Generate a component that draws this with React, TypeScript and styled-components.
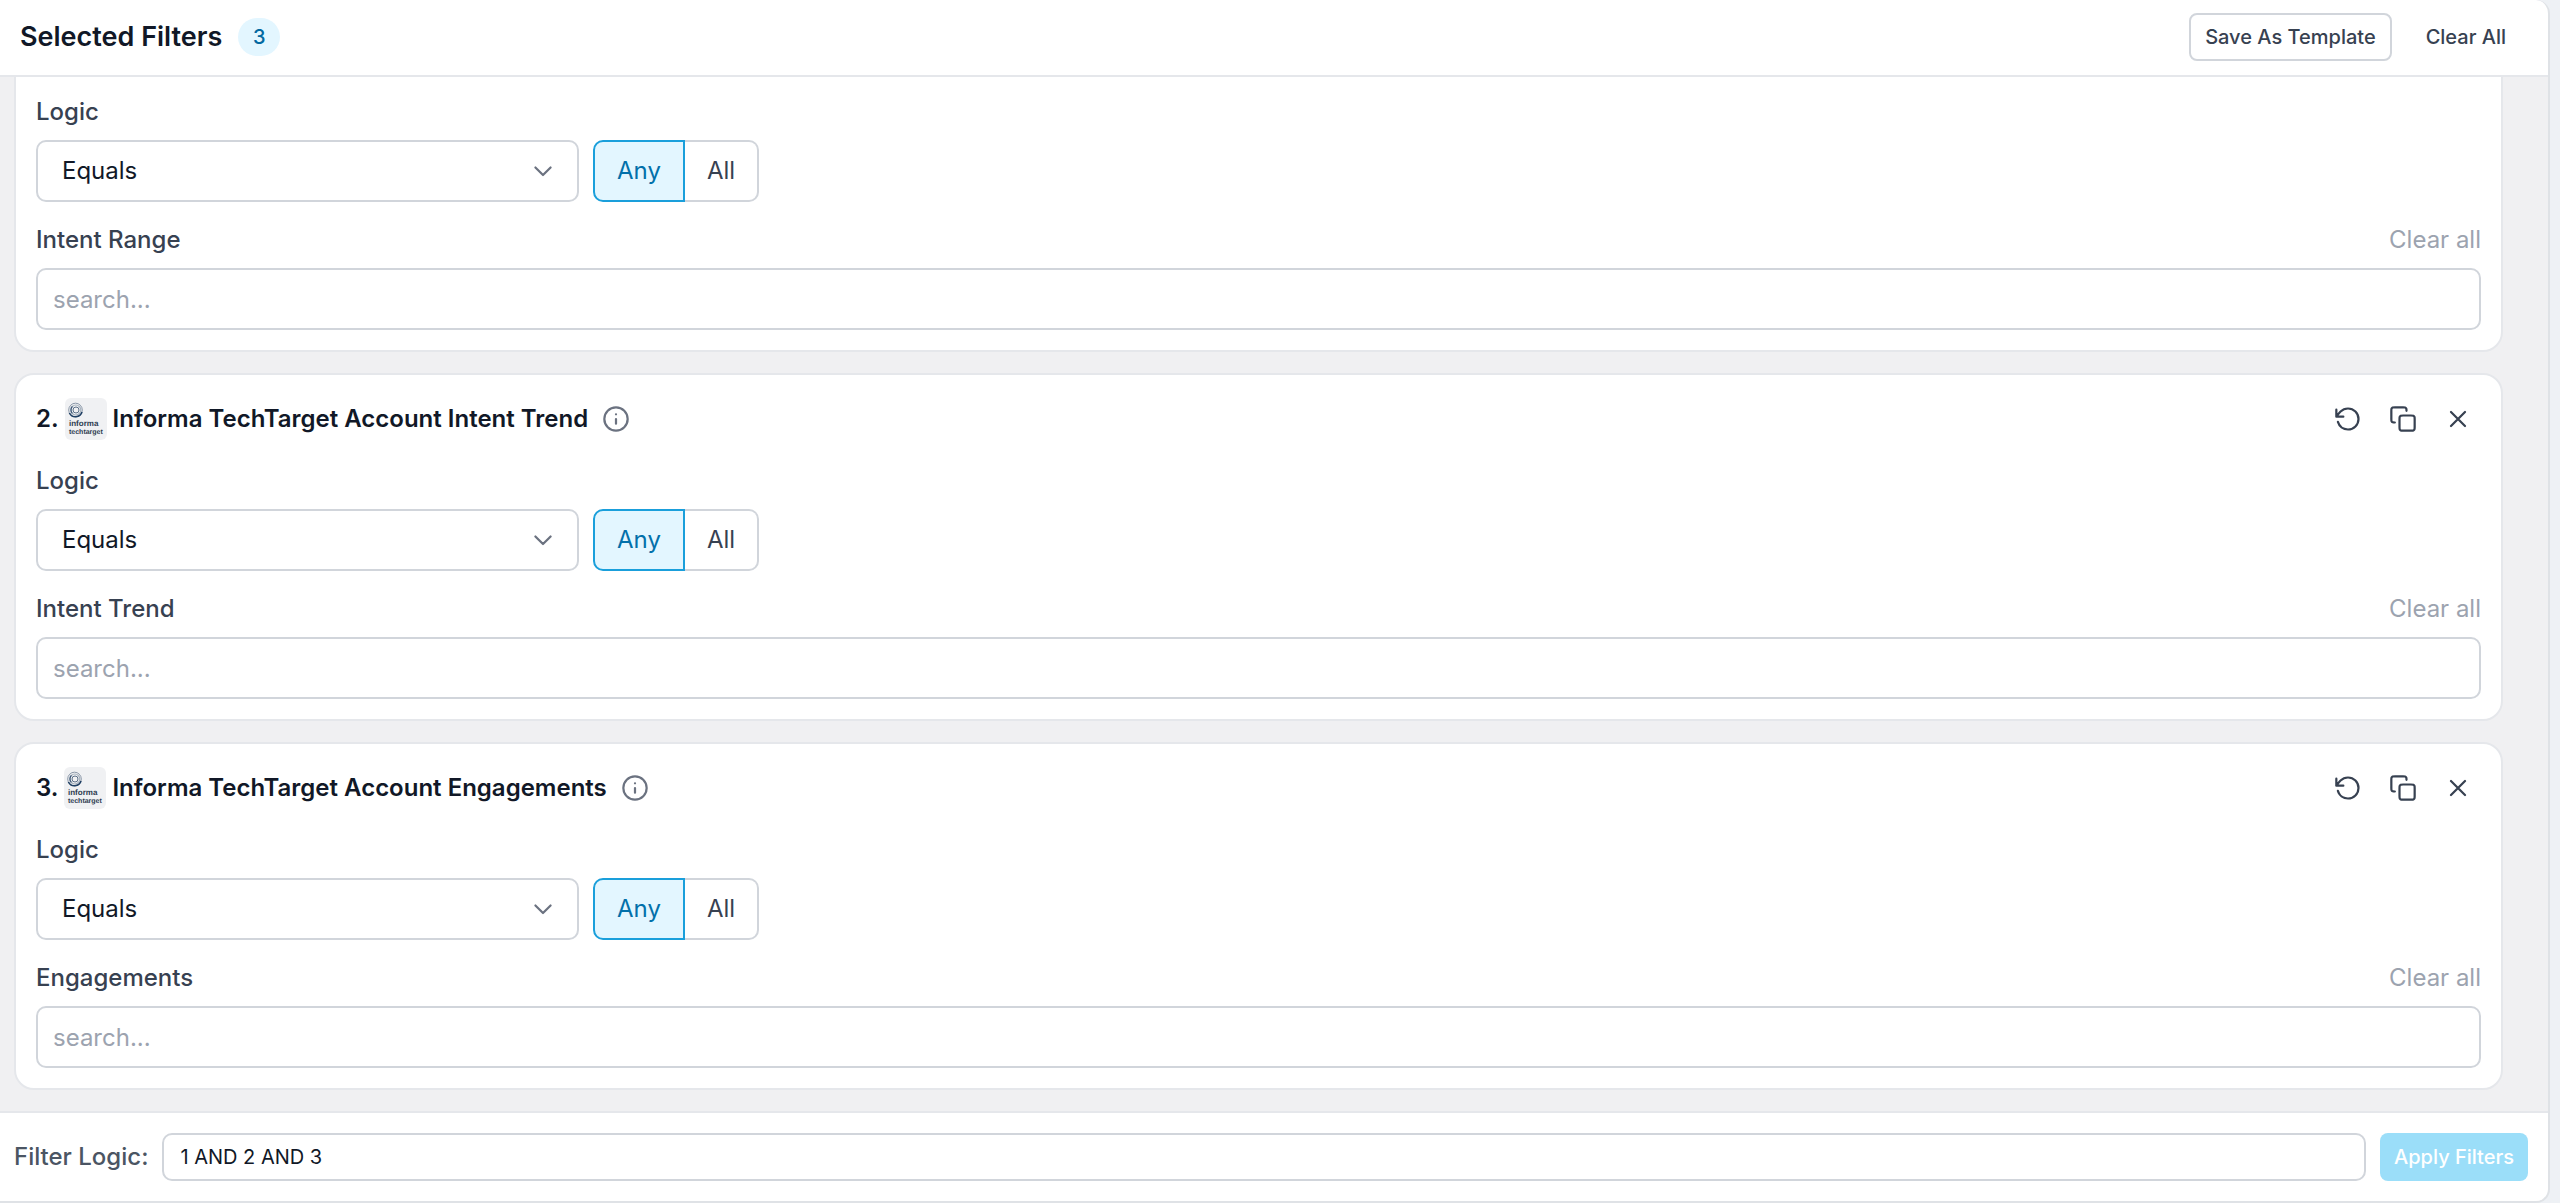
import React, { useLayoutEffect, useRef, useState } from "react";
import styled, { createGlobalStyle } from "styled-components";

const GlobalStyle = createGlobalStyle`
  *, *::before, *::after { box-sizing: border-box; }
  body {
    margin: 0;
    background: #eef1f5;
    color: #111827;
    font-family: Inter, "Liberation Sans", sans-serif;
    font-size: 24px;
    line-height: 36px;
  }
  button, input, select { font: inherit; color: inherit; margin: 0; }
  button { cursor: pointer; }
`;

const Page = styled.div`
  height: 100vh;
  padding: 0 10px 0 0;
`;

const Panel = styled.main`
  display: flex;
  flex-direction: column;
  height: 100%;
  overflow: hidden;
  background: #ffffff;
  border: 1px solid #dfe2e6;
  border-width: 0 2px 2px 0;
  border-radius: 0 14px 14px 0;
`;

const Header = styled.header`
  display: flex;
  align-items: center;
  justify-content: space-between;
  flex: none;
  height: 77px;
  padding: 0 26px 1px 20px;
  border-bottom: 2px solid #e5e7eb;
`;

const TitleGroup = styled.div`
  display: flex;
  align-items: center;
  gap: 16px;
`;

const Title = styled.h1`
  margin: 0;
  font-size: 27px;
  font-weight: 600;
`;

const CountBadge = styled.span`
  min-width: 42px;
  border-radius: 20px;
  background: #e3f6ff;
  color: #0369a1;
  font-size: 20px;
  font-weight: 500;
  line-height: 38px;
  text-align: center;
`;

const ButtonGroup = styled.div`
  display: flex;
  gap: 18px;
`;

const Button = styled.button<{ $variant: "outline" | "plain" | "primary" }>`
  flex: none;
  height: 48px;
  padding: 0 14px;
  border: ${({ $variant }) => ($variant === "primary" ? "0" : "2px")} solid
    ${({ $variant }) => ($variant === "outline" ? "#d1d5db" : "transparent")};
  border-radius: 8px;
  background: ${({ $variant }) => ($variant === "primary" ? "#9bdef9" : "#ffffff")};
  color: ${({ $variant }) => ($variant === "primary" ? "#ffffff" : "#374151")};
  font-size: 20px;
  font-weight: 500;
  line-height: 32px;
`;

const FilterList = styled.div`
  display: flex;
  flex-direction: column;
  flex: 1;
  gap: 21px;
  min-height: 0;
  padding: 21px 45px 21px 14px;
  overflow-y: auto;
  scrollbar-width: none;
  background: #f0f0f2;
`;

const Card = styled.section`
  flex: none;
  padding: 20px;
  border: 2px solid #e5e7eb;
  border-radius: 20px;
  background: #ffffff;
`;

const CardHeader = styled.div`
  display: flex;
  align-items: center;
  justify-content: space-between;
  height: 48px;
`;

const CardTitle = styled.h2`
  display: flex;
  align-items: center;
  gap: 6px;
  margin: 0;
  font-size: 24px;
  font-weight: 600;
`;

const LogoTile = styled.svg`
  width: 42px;
  height: 42px;
  border-radius: 6px;
  background: #f0f1f3;
  font-family: "Liberation Sans", sans-serif;
  text-rendering: geometricPrecision;
`;

const InfoButton = styled.button`
  display: flex;
  margin-left: 8px;
  padding: 0;
  border: 0;
  background: none;
  color: #6b7280;
`;

const Actions = styled.div`
  display: flex;
  gap: 9px;
`;

const IconButton = styled.button`
  display: grid;
  place-items: center;
  width: 46px;
  height: 46px;
  padding: 0;
  border: 0;
  background: none;
  color: #374151;
`;

const Field = styled.div`
  display: flex;
  flex-direction: column;
  gap: 10px;
  margin-top: 20px;
`;

const FieldHeader = styled.div`
  display: flex;
  justify-content: space-between;
`;

const FieldLabel = styled.label`
  color: #374151;
  font-weight: 500;
`;

const ClearLink = styled.button`
  padding: 0;
  border: 0;
  background: none;
  color: #9ca3af;
`;

const LogicRow = styled.div`
  display: flex;
  gap: 14px;
`;

const SelectBox = styled.div`
  position: relative;
  width: 543px;
`;

const Select = styled.select`
  width: 100%;
  height: 62px;
  padding: 0 60px 0 24px;
  border: 2px solid #d1d5db;
  border-radius: 10px;
  background: #ffffff;
  appearance: none;
`;

const SelectArrow = styled.span`
  position: absolute;
  top: 0;
  right: 22px;
  bottom: 0;
  display: flex;
  align-items: center;
  color: #6b7280;
  pointer-events: none;
`;

const Segments = styled.div`
  display: flex;
`;

const Segment = styled.button<{ $active: boolean; $side: "left" | "right" }>`
  height: 62px;
  padding: 0 22px;
  border: 2px solid ${({ $active }) => ($active ? "#1a9fdb" : "#d1d5db")};
  border-left-width: ${({ $side, $active }) => ($side === "left" || $active ? 2 : 0)}px;
  border-right-width: ${({ $side, $active }) => ($side === "right" || $active ? 2 : 0)}px;
  border-radius: ${({ $side }) => ($side === "left" ? "10px 0 0 10px" : "0 10px 10px 0")};
  background: ${({ $active }) => ($active ? "#e3f6ff" : "#ffffff")};
  color: ${({ $active }) => ($active ? "#0270aa" : "#374151")};
`;

const SearchInput = styled.input`
  width: 100%;
  height: 62px;
  padding: 0 15px;
  border: 2px solid #d1d5db;
  border-radius: 10px;
  background: #ffffff;
  &::placeholder { color: #9ca3af; opacity: 1; }
`;

const Footer = styled.footer`
  display: flex;
  align-items: center;
  flex: none;
  gap: 14px;
  height: 90px;
  padding: 0 20px 0 14px;
  border-top: 2px solid #e5e7eb;
`;

const FooterLabel = styled.label`
  color: #4b5563;
  font-weight: 500;
`;

const LogicInput = styled.input`
  flex: 1;
  min-width: 0;
  height: 48px;
  padding: 0 16px;
  border: 2px solid #d1d5db;
  border-radius: 10px;
  background: #ffffff;
  font-size: 20px;
`;

const iconPaths = {
  info: "M12 16V12M12 8H12.01M22 12a10 10 0 1 1-20 0 10 10 0 0 1 20 0Z",
  reset:
    "M2 10C2 10 4.005 7.268 5.634 5.638C7.263 4.008 9.514 3 12 3C16.971 3 21 7.029 21 12C21 16.971 16.971 21 12 21C7.897 21 4.435 18.254 3.352 14.5M2 10V4M2 10H8",
  copy:
    "M5 15C4.068 15 3.602 15 3.235 14.848C2.745 14.645 2.355 14.255 2.152 13.765C2 13.398 2 12.932 2 12V5.2C2 4.08 2 3.52 2.218 3.092C2.41 2.716 2.716 2.41 3.092 2.218C3.52 2 4.08 2 5.2 2H12C12.932 2 13.398 2 13.765 2.152C14.255 2.355 14.645 2.745 14.848 3.235C15 3.602 15 4.068 15 5M12.2 22H18.8C19.92 22 20.48 22 20.908 21.782C21.284 21.59 21.59 21.284 21.782 20.908C22 20.48 22 19.92 22 18.8V12.2C22 11.08 22 10.52 21.782 10.092C21.59 9.716 21.284 9.41 20.908 9.218C20.48 9 19.92 9 18.8 9H12.2C11.08 9 10.52 9 10.092 9.218C9.716 9.41 9.41 9.716 9.218 10.092C9 10.52 9 11.08 9 12.2V18.8C9 19.92 9 20.48 9.218 20.908C9.41 21.284 9.716 21.59 10.092 21.782C10.52 22 11.08 22 12.2 22Z",
  close: "M18 6L6 18M6 6L18 18",
  chevron: "M5.5 9L12 15.5L18.5 9",
};

function Icon({ name }: { name: keyof typeof iconPaths }) {
  return (
    <svg
      width="28"
      height="28"
      viewBox="0 0 24 24"
      fill="none"
      stroke="currentColor"
      strokeWidth="1.9"
      strokeLinecap="round"
      strokeLinejoin="round"
      aria-hidden="true"
    >
      <path d={iconPaths[name]} />
    </svg>
  );
}

function InformaLogo() {
  return (
    <LogoTile viewBox="0 0 42 42" aria-hidden="true">
      <g fill="none">
        <circle cx="10.5" cy="12" r="6.8" stroke="#8b98a8" strokeWidth="1" />
        <circle cx="10.8" cy="12" r="5" stroke="#a9b4c0" strokeWidth="1.2" />
        <circle cx="11" cy="12" r="3" stroke="#5c7088" strokeWidth="1" />
        <path d="M4.4 15a6.8 6.8 0 0 0 12.6-1" stroke="#1f3f63" strokeWidth="1.6" />
        <path d="M7.4 8.4a5 5 0 0 0 0 7" stroke="#3a5575" strokeWidth="1.2" />
      </g>
      <text x="4" y="28" fontSize="8" fontWeight="700" fill="#2b3a4f">informa</text>
      <text x="4" y="36" fontSize="7" fill="#2b3a4f">techtarget</text>
    </LogoTile>
  );
}

interface Filter {
  id: number;
  title?: string;
  field: string;
}

const filters: Filter[] = [
  { id: 1, field: "Intent Range" },
  { id: 2, title: "Informa TechTarget Account Intent Trend", field: "Intent Trend" },
  { id: 3, title: "Informa TechTarget Account Engagements", field: "Engagements" },
];

function FilterCard({ id, title, field }: Filter) {
  const [match, setMatch] = useState<"any" | "all">("any");
  const [value, setValue] = useState("");
  return (
    <Card>
      {title && (
        <CardHeader>
          <CardTitle>
            <span>{id}.</span>
            <InformaLogo />
            <span>{title}</span>
            <InfoButton type="button" aria-label="About this filter">
              <Icon name="info" />
            </InfoButton>
          </CardTitle>
          <Actions>
            <IconButton type="button" aria-label="Reset filter"><Icon name="reset" /></IconButton>
            <IconButton type="button" aria-label="Duplicate filter"><Icon name="copy" /></IconButton>
            <IconButton type="button" aria-label="Remove filter"><Icon name="close" /></IconButton>
          </Actions>
        </CardHeader>
      )}
      <Field>
        <FieldHeader>
          <FieldLabel htmlFor={`logic-${id}`}>Logic</FieldLabel>
        </FieldHeader>
        <LogicRow>
          <SelectBox>
            <Select id={`logic-${id}`} defaultValue="Equals">
              <option>Equals</option>
            </Select>
            <SelectArrow><Icon name="chevron" /></SelectArrow>
          </SelectBox>
          <Segments role="group" aria-label="Match">
            <Segment type="button" $side="left" $active={match === "any"} aria-pressed={match === "any"} onClick={() => setMatch("any")}>
              Any
            </Segment>
            <Segment type="button" $side="right" $active={match === "all"} aria-pressed={match === "all"} onClick={() => setMatch("all")}>
              All
            </Segment>
          </Segments>
        </LogicRow>
      </Field>
      <Field>
        <FieldHeader>
          <FieldLabel htmlFor={`value-${id}`}>{field}</FieldLabel>
          <ClearLink type="button" onClick={() => setValue("")}>Clear all</ClearLink>
        </FieldHeader>
        <SearchInput id={`value-${id}`} placeholder="search..." value={value} onChange={(e) => setValue(e.target.value)} />
      </Field>
    </Card>
  );
}

export default function App() {
  const listRef = useRef<HTMLDivElement>(null);

  // Open on the most recently added filter.
  useLayoutEffect(() => {
    const list = listRef.current;
    if (list) list.scrollTop = list.scrollHeight;
  }, []);

  return (
    <>
      <GlobalStyle />
      <Page>
        <Panel>
          <Header>
            <TitleGroup>
              <Title>Selected Filters</Title>
              <CountBadge>{filters.length}</CountBadge>
            </TitleGroup>
            <ButtonGroup>
              <Button type="button" $variant="outline">Save As Template</Button>
              <Button type="button" $variant="plain">Clear All</Button>
            </ButtonGroup>
          </Header>
          <FilterList ref={listRef}>
            {filters.map((filter) => (
              <FilterCard key={filter.id} {...filter} />
            ))}
          </FilterList>
          <Footer>
            <FooterLabel htmlFor="filter-logic">Filter Logic:</FooterLabel>
            <LogicInput id="filter-logic" defaultValue="1 AND 2 AND 3" />
            <Button type="button" $variant="primary">Apply Filters</Button>
          </Footer>
        </Panel>
      </Page>
    </>
  );
}
